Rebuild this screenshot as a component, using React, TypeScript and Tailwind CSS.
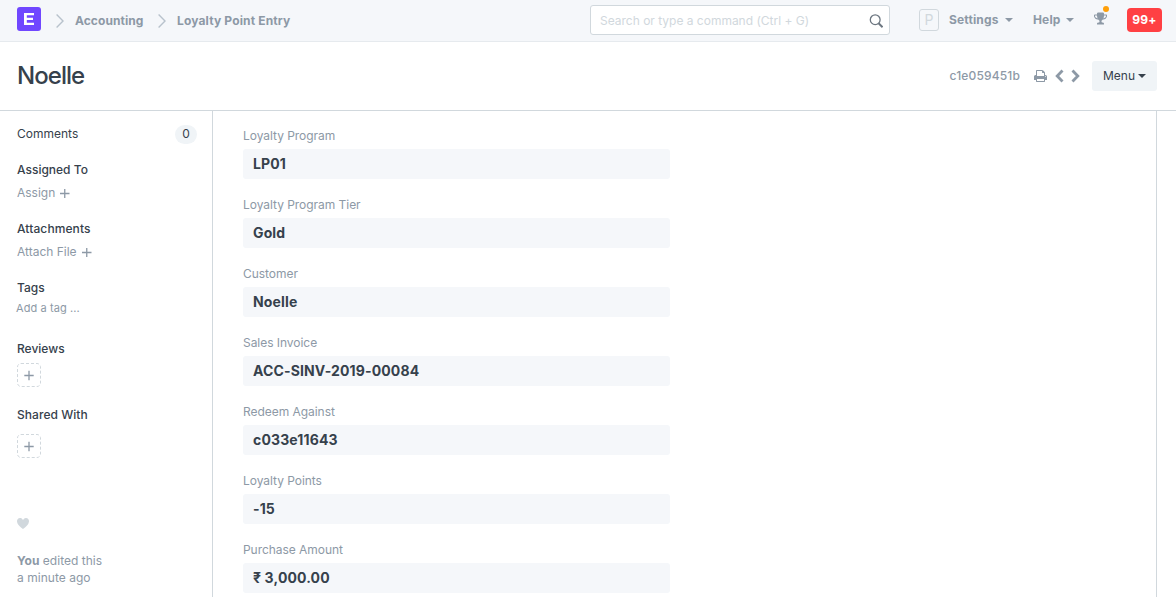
const fields: [string, string][] = [
  ['Loyalty Program', 'LP01'],
  ['Loyalty Program Tier', 'Gold'],
  ['Customer', 'Noelle'],
  ['Sales Invoice', 'ACC-SINV-2019-00084'],
  ['Redeem Against', 'c033e11643'],
  ['Loyalty Points', '-15'],
  ['Purchase Amount', '₹ 3,000.00'],
];

function Caret({ className = '' }: { className?: string }) {
  return (
    <svg className={`h-1 w-2 shrink-0 ${className}`} viewBox="0 0 8 4" fill="currentColor">
      <path d="M0 0h8L4 4z" />
    </svg>
  );
}

function Plus({ className = '' }: { className?: string }) {
  return (
    <svg className={`h-[10px] w-[10px] shrink-0 ${className}`} viewBox="0 0 10 10" stroke="currentColor" strokeWidth="1.3">
      <path d="M0 5.500h9.500M4.750 1v9" />
    </svg>
  );
}

function Separator() {
  return (
    <svg className="h-[14px] w-2 shrink-0 text-[#b8c2cc]" viewBox="0 0 8 14" fill="none" stroke="currentColor" strokeWidth="1.4">
      <path d="M.6 .6L7 7 .6 13.4" />
    </svg>
  );
}

function Navbar() {
  return (
    <header className="flex h-[42px] shrink-0 items-start border-b border-[#e6eaee] bg-[#f5f7fa] pl-[17px] pr-[14px] text-xs font-bold text-[#8d99a6]">
      <svg className="mt-[7px] h-6 w-6 shrink-0" viewBox="0 0 24 24">
        <rect width="24" height="24" rx="3" fill="#7047ff" />
        <path d="M7 6h10v2.3H9.8v2.5h6.2v2.2H9.8v2.7H17V18H7z" fill="#fff" />
      </svg>
      <div className="mt-[13px] flex h-[15px] items-center">
        <span className="ml-[15px] flex"><Separator /></span>
        <span className="ml-[11px] w-[69px] whitespace-nowrap tracking-[0.06px]">Accounting</span>
        <span className="ml-[14px] flex"><Separator /></span>
        <span className="ml-[11px] whitespace-nowrap tracking-[0.15px]">Loyalty Point Entry</span>
      </div>
      <div className="ml-auto mt-[5px] flex h-[30px] w-[300px] items-center rounded-[3px] border border-[#d1d8dd] bg-white pl-[9px] pr-[6px] font-normal text-[#d1d8dd]">
        <span className="grow whitespace-nowrap pt-px tracking-[-0.01px]">Search or type a command (Ctrl + G)</span>
        <svg className="mt-[2px] h-[14px] w-[14px] text-[#6c7680]" viewBox="0 0 14 14" fill="none" stroke="currentColor">
          <circle cx="6.200" cy="5.7" r="4.9" strokeWidth="1.3" />
          <path d="M9.6 9.2l4 4" strokeWidth="2" />
        </svg>
      </div>
      <div className="ml-[29px] mt-[9px] flex h-[22px] w-5 items-center justify-center rounded-[3px] border border-[#d1d8dd] text-sm font-normal text-[#d1d8dd]">P</div>
      <div className="ml-[10px] mt-[12px] flex h-4 w-[64px] items-center justify-between tracking-[0.15px]">Settings <Caret /></div>
      <div className="ml-[20px] mt-[12px] flex h-4 w-[41px] items-center justify-between tracking-[0.15px]">Help <Caret /></div>
      <div className="relative ml-[20px] mt-[12px] h-[13px] w-[13px]">
        <svg className="h-[13px] w-[13px]" viewBox="0 0 1664 1536" fill="currentColor">
          <path d="M458 755q-74-162-74-371H128v96q0 78 94.500 162T458 755zM1536 480v-96h-256q0 209-74 371 141-29 235.500-113T1536 480zM1664 352v128q0 71-41.500 143t-112 130-173 97.500T1122 894q-42 54-95 95-38 34-52.500 72.500T960 1152q0 54 30.500 91t97.500 37q75 0 133.500 45.500T1280 1440v64q0 14-9 23t-23 9H416q-14 0-23-9t-9-23v-64q0-69 58.500-114.500T576 1280q67 0 97.500-37t30.500-91q0-52-14.500-90.500T637 989q-53-41-95-95-113-5-215.500-43.500t-173-97.500-112-130T0 480V352q0-40 28-68t68-28h288v-96q0-66 47-113T544 0h576q66 0 113 47t47 113v96h288q40 0 68 28t28 68z" />
        </svg>
        <span className="absolute left-[9px] top-[-6px] h-[6px] w-[6px] rounded-full bg-[#ffa00a]" />
      </div>
      <div className="ml-[20px] mt-2 flex h-6 w-[35px] items-center justify-center rounded-[4px] bg-[#ff4043] tracking-[0.3px] text-white">99+</div>
    </header>
  );
}

function TitleBar() {
  return (
    <div className="flex h-[69px] shrink-0 items-center border-b border-[#d1d8dd] pl-[17px] pr-[19px] text-[#8d99a6]">
      <h1 className="text-2xl font-medium tracking-[-0.95px] text-[#36414c]">Noelle</h1>
      <span className="ml-auto text-xs font-medium tracking-[0.15px]">c1e059451b</span>
      <svg className="ml-[14px] h-3 w-[13px]" viewBox="0 0 1664 1536" fill="currentColor">
        <path d="M384 1408h896v-256H384v256zM384 768h896V384h-160q-40 0-68-28t-28-68V128H384v640zM1536 832q0-26-19-45t-45-19-45 19-19 45 19 45 45 19 45-19 19-45zM1664 832v416q0 13-9.500 22.500t-22.500 9.500h-224v160q0 40-28 68t-68 28H352q-40 0-68-28t-28-68v-160H32q-13 0-22.500-9.500T0 1248V832q0-79 56.500-135.500T192 640h64V96q0-40 28-68t68-28h672q40 0 88 20t76 48l152 152q28 28 48 76t20 88v256h64q79 0 135.500 56.500T1664 832z" />
      </svg>
      <svg className="ml-[8px] h-[14px] w-[9px]" viewBox="0 0 9 14" fill="none" stroke="currentColor" strokeWidth="2.8"><path d="M7.500 1.500L2.200 7l5.300 5.500" /></svg>
      <svg className="ml-[7px] h-[14px] w-[9px]" viewBox="0 0 9 14" fill="none" stroke="currentColor" strokeWidth="2.8"><path d="M1.500 1.500L6.800 7l-5.300 5.500" /></svg>
      <button className="ml-[12px] flex h-[30px] w-[65px] items-center rounded-[3px] bg-[#f0f4f7] pl-[11px] text-xs text-[#36414c]">
        Menu <Caret className="ml-[3px]" />
      </button>
    </div>
  );
}

function AddBox({ className }: { className: string }) {
  return (
    <div className={`flex h-6 w-6 items-center justify-center text-[#8d99a6] ${className}`}>
      <svg className="h-6 w-6" viewBox="0 0 24 24" fill="none">
        <rect x=".5" y=".5" width="23" height="23" rx="3.500" stroke="#d1d8dd" strokeDasharray="3 2" />
        <path d="M7.300 12.500h9.400M12 7.800v9.400" stroke="currentColor" strokeWidth="1.300" />
      </svg>
    </div>
  );
}

function Sidebar() {
  return (
    <aside className="flex w-[213px] shrink-0 flex-col border-r border-[#d1d8dd] pl-[17px] text-xs leading-[17px] text-[#8d99a6]">
      <div className="mt-[12px] flex h-5 items-center justify-between pr-[15px] text-[#36414c]">
        Comments
        <span className="mt-[2px] flex h-[19px] w-[22px] items-center justify-center rounded-full bg-[#f0f4f7] pb-px">0</span>
      </div>
      <h2 className="mt-[18px] font-medium text-[#36414c]">Assigned To</h2>
      <div className="mt-[6px] flex items-center">Assign <Plus className="ml-[5px]" /></div>
      <h2 className="mt-[19px] font-medium tracking-[0.1px] text-[#36414c]">Attachments</h2>
      <div className="mt-[6px] flex items-center">Attach File <Plus className="ml-[5px]" /></div>
      <h2 className="mt-[19px] font-medium text-[#36414c]">Tags</h2>
      <div className="-ml-px mt-[4px] text-[11px] tracking-[0.08px]">Add a tag ...</div>
      <h2 className="mt-[23px] font-medium text-[#36414c]">Reviews</h2>
      <AddBox className="mt-[6px]" />
      <h2 className="mt-[19px] font-medium tracking-[0.05px] text-[#36414c]">Shared With</h2>
      <AddBox className="mt-[11px]" />
      <svg className="mt-[58px] h-4 w-3 text-[#d1d8dd]" viewBox="0 0 12 16" fill="currentColor">
        <path d="M11.200 3c-.52-.63-1.250-1-2.200-1-.97 0-1.690.42-2.200 1-.51.58-.78.92-.8 1-.02-.08-.28-.42-.8-1-.52-.58-1.170-1-2.200-1-.95.05-1.690.38-2.200 1-.52.61-.78 1.280-.8 2 0 .52.09 1.520.67 2.670C1.250 8.820 3.010 10.610 6 13c2.980-2.390 4.770-4.170 5.340-5.330C11.910 6.510 12 5.500 12 5c-.02-.72-.28-1.390-.8-2z" />
      </svg>
      <p className="mt-[20px] tracking-[0.03px]"><b>You</b> edited this<br />a minute ago</p>
    </aside>
  );
}

export default function App() {
  return (
    <div className="flex h-[597px] w-[1176px] flex-col overflow-hidden bg-white font-['Inter',sans-serif] text-[#36414c]">
      <Navbar />
      <TitleBar />
      <div className="flex min-h-0 grow overflow-hidden">
        <Sidebar />
        <main className="flex w-[944px] flex-col gap-[21px] border-r border-[#d1d8dd] pl-[30px] pt-[16px]">
          {fields.map(([label, value]) => (
            <div key={label} className="h-12 w-[427px] shrink-0">
              <div className="h-[22px] text-xs leading-[17px] tracking-[-0.04px] text-[#8d99a6]">{label}</div>
              <div className="flex h-[30px] items-center rounded-[3px] bg-[#f5f7fa] px-[10px] text-sm font-bold tracking-[0.14px]">{value}</div>
            </div>
          ))}
        </main>
      </div>
    </div>
  );
}
